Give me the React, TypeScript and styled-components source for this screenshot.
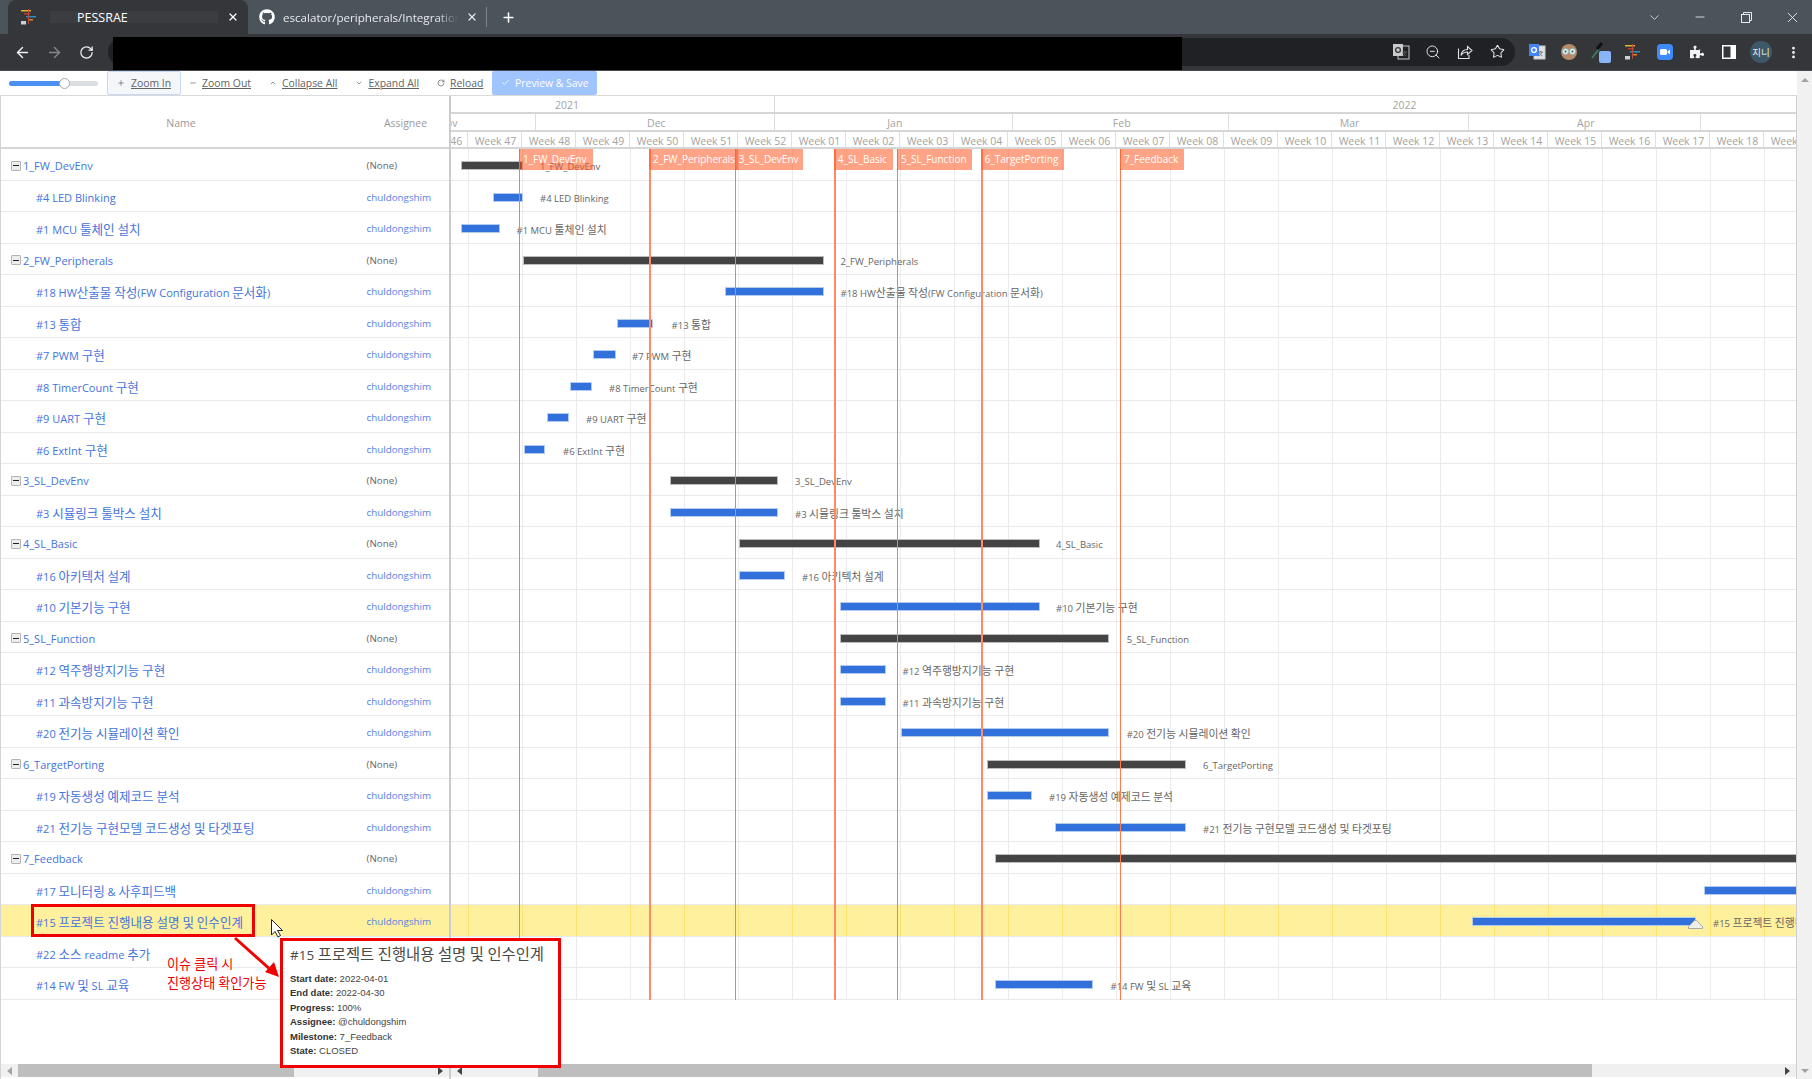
import React from 'react'
import styled, { createGlobalStyle } from 'styled-components'
import { ArrowLeft, ArrowRight, RotateCw, X, Plus, ChevronDown, ChevronUp, Minus, ZoomOut, Star, Check, EllipsisVertical } from 'lucide-react'
import { FaGithub, FaPuzzlePiece } from 'react-icons/fa'

const PANE_LEFT = 451
const ROW_HEIGHT = 31.5

const GlobalStyle = createGlobalStyle`
  html, body {
    margin: 0;
    padding: 0;
    background: #fff;
    overflow: hidden;
  }
  * {
    box-sizing: border-box;
  }
  body {
    font-family: 'Open Sans', 'Noto Sans CJK KR', sans-serif;
  }
`

const Page = styled.div`
  position: relative;
  width: 1812px;
  height: 1079px;
  display: flex;
  flex-direction: column;
  overflow: hidden;
`

const TabBar = styled.div`
  height: 34px;
  background: #4b545b;
  display: flex;
  align-items: stretch;
  padding-left: 8px;
  color: #e8eaed;
  font-size: 12px;
`

const ActiveTab = styled.div`
  position: relative;
  width: 240px;
  background: #35363a;
  border-radius: 8px 8px 0 0;
  display: flex;
  align-items: center;
  padding-left: 12px;
  color: #fff;
`

const TabTitle = styled.div`
  flex: 1;
  margin-left: 12px;
  height: 12px;
  background: #3b3d41;
  display: flex;
  align-items: center;
  padding-left: 27px;
  font-size: 12.5px;
`

const TabClose = styled.div`
  width: 30px;
  display: flex;
  justify-content: center;
`

const SecondTab = styled.div`
  width: 236px;
  display: flex;
  align-items: center;
  padding-left: 11px;
  gap: 8px;
`

const FadedTitle = styled.div`
  width: 175px;
  white-space: nowrap;
  overflow: hidden;
  font-size: 11.6px;
  -webkit-mask-image: linear-gradient(to right, #000 88%, transparent 100%);
  mask-image: linear-gradient(to right, #000 88%, transparent 100%);
`

const TabSeparator = styled.div`
  width: 1px;
  height: 20px;
  align-self: center;
  background: #7e868c;
  margin: 0 14px 0 2px;
`

const TabPlus = styled.div`
  display: flex;
  align-items: center;
`

const WindowControls = styled.div`
  margin-left: auto;
  margin-right: -3px;
  display: flex;
  align-items: center;
`

const WindowButton = styled.div`
  width: 46px;
  display: flex;
  justify-content: center;
  color: #e8eaed;
`

const NavBar = styled.div`
  position: relative;
  height: 37px;
  background: #35363a;
  border-bottom: 1px solid #4a4b4f;
  display: flex;
  align-items: center;
  padding-left: 6px;
  color: #dfe1e5;
`

const IconSlot = styled.div<{ $dim?: boolean }>`
  width: 32px;
  height: 28px;
  display: flex;
  align-items: center;
  justify-content: center;
  color: ${({ $dim }) => ($dim ? '#85878a' : '#f1f3f4')};
`

const Omnibox = styled.div`
  width: 1407px;
  height: 28px;
  margin-left: 6px;
  margin-right: 6px;
  margin-top: -1px;
  border-radius: 14px;
  background: #202124;
  display: flex;
  align-items: center;
  justify-content: flex-end;
  padding-right: 2px;
`

const Redaction = styled.div`
  position: absolute;
  left: 113px;
  top: 3px;
  bottom: 0;
  width: 1069px;
  background: #000;
`

const Avatar = styled.div`
  width: 22px;
  height: 22px;
  border-radius: 50%;
  background: #3d5866;
  color: #e8eaed;
  font-size: 9.5px;
  display: flex;
  align-items: center;
  justify-content: center;
`

const Main = styled.div`
  flex: 1;
  min-height: 0;
  display: flex;
`

const Content = styled.div`
  width: 1797px;
  display: flex;
  flex-direction: column;
`

const Toolbar = styled.div`
  height: 24px;
  display: flex;
  align-items: stretch;
  font-size: 10.4px;
  color: #606266;
`

const SliderBox = styled.div`
  width: 107px;
  padding: 0 9px;
  display: flex;
  align-items: center;
`

const SliderTrack = styled.div`
  position: relative;
  width: 90px;
  height: 5px;
  border-radius: 3px;
  background: #dcdfe2;
`

const SliderFill = styled.div`
  width: 55px;
  height: 100%;
  border-radius: 3px;
  background: #4a90f5;
`

const SliderThumb = styled.div`
  position: absolute;
  left: 50px;
  top: -3px;
  width: 11px;
  height: 11px;
  border-radius: 50%;
  background: #fff;
  border: 1px solid #a9a9a9;
`

const ToolButton = styled.div<{ $active?: boolean }>`
  display: flex;
  align-items: center;
  gap: ${({ $active }) => ($active ? '7px' : '6px')};
  padding: 0 ${({ $active }) => ($active ? '9px' : '8px')} 1px;
  margin-right: ${({ $active }) => ($active ? '-1px' : '0')};
  border: 1px solid ${({ $active }) => ($active ? '#c6d9f5' : 'transparent')};
  border-radius: 2px;
  background: ${({ $active }) => ($active ? '#f4f6f9' : 'transparent')};
  span {
    text-decoration: underline;
    white-space: nowrap;
  }
  svg {
    width: 8px;
    height: 8px;
    margin-right: -1px;
    flex: none;
  }
`

const SaveButton = styled.div`
  width: 105px;
  padding-bottom: 1px;
  background: #a0c4fd;
  color: #fff;
  border-radius: 2px;
  display: flex;
  align-items: center;
  justify-content: center;
  gap: 5px;
  white-space: nowrap;
  svg {
    width: 9px;
    height: 9px;
  }
`

const Gantt = styled.div`
  flex: 1;
  min-height: 0;
  display: flex;
  border-top: 1px solid #d9d9d9;
  border-left: 1px solid #d4d4d4;
  border-right: 1px solid #cfcfcf;
`

const LeftPane = styled.div`
  width: 450px;
  flex: none;
  display: flex;
  flex-direction: column;
  border-right: 2px solid #cccccc;
`

const NameHeader = styled.div`
  height: 53px;
  display: grid;
  grid-template-columns: 360px 1fr;
  align-items: center;
  padding-top: 2px;
  border-bottom: 2px solid #d6d6d6;
  color: #999;
  font-size: 10.5px;
  text-align: center;
`

const AssigneeTitle = styled.div`
  padding-left: 1px;
`

const Rows = styled.div`
  display: flex;
  flex-direction: column;
`

const NameRow = styled.div<{ $hl?: boolean }>`
  height: ${ROW_HEIGHT}px;
  flex: none;
  display: flex;
  align-items: center;
  padding-top: 3px;
  border-bottom: 1px solid #e9e9e9;
  background: ${({ $hl }) => ($hl ? '#fef09c' : 'transparent')};
`

const NameCell = styled.div<{ $group?: boolean }>`
  width: 365.5px;
  flex: none;
  display: flex;
  align-items: center;
  padding-left: ${({ $group }) => ($group ? '10px' : '35px')};
  color: #4474dc;
  font-size: 11px;
  white-space: pre;
`

// Hangul runs are set a little larger than the latin text around them
const Ko = styled.span`
  font-size: 1.14em;
`

const Toggle = styled.div`
  width: 10px;
  height: 10px;
  margin-right: 2px;
  background: #ededed;
  border: 1px solid #b4b4b4;
  border-radius: 1px;
  display: flex;
  align-items: center;
  justify-content: center;
  &::after {
    content: '';
    width: 6px;
    height: 1px;
    background: #222;
  }
`

const AssigneeCell = styled.div<{ $none?: boolean }>`
  color: ${({ $none }) => ($none ? '#666' : '#5681e2')};
  font-size: 9.8px;
`

const Spacer = styled.div`
  flex: 1;
`

const TimelinePane = styled.div`
  flex: 1;
  min-width: 0;
  display: flex;
  flex-direction: column;
  overflow: hidden;
`

const HeaderStrip = styled.div<{ $height: number }>`
  height: ${({ $height }) => $height}px;
  flex: none;
  display: flex;
  margin-left: -93px;
  border-bottom: 2px solid #d6d6d6;
  color: #a3a3a3;
  font-size: 10.5px;
`

const HeaderCell = styled.div<{ $border?: boolean }>`
  flex: none;
  display: flex;
  align-items: center;
  justify-content: center;
  padding-left: 2px;
  padding-top: 2px;
  white-space: nowrap;
  border-right: ${({ $border }) => ($border ? '1.5px solid #dddddd' : 'none')};
`

const WeekCell = styled(HeaderCell)`
  width: 54px;
  border-right: 1px solid #e0e0e0;
`

const WeekOffset = styled.div`
  width: 56px;
  flex: none;
  margin-left: -54px;
`

const TimelineRows = styled.div`
  position: relative;
  display: flex;
  flex-direction: column;
`

const TimelineRow = styled.div<{ $hl?: boolean }>`
  position: relative;
  height: ${ROW_HEIGHT}px;
  flex: none;
  border-bottom: 1px solid #e9e9e9;
  background-color: ${({ $hl }) => ($hl ? '#fef09c' : 'transparent')};
  background-image: linear-gradient(to right, ${({ $hl }) => ($hl ? '#fbe36e' : '#ebebeb')} 1px, transparent 1px);
  background-size: 54px 100%;
  background-position: 17px 0;
`

const Bar = styled.div<{ $group?: boolean }>`
  position: absolute;
  top: 12px;
  height: 9px;
  background: ${({ $group }) => ($group ? '#444444' : '#3271dc')};
  border: 1px solid ${({ $group }) => ($group ? '#bdbdbd' : '#b4caef')};
`

const BarLabel = styled.div`
  position: absolute;
  top: 10px;
  font-size: 9.5px;
  line-height: 16px;
  color: #666;
  white-space: pre;
`

const Handle = styled.svg`
  position: absolute;
  left: 1236.5px;
  top: 14.5px;
`

const Milestone = styled.div<{ $thick?: boolean }>`
  position: absolute;
  top: 0;
  bottom: 0;
  width: ${({ $thick }) => ($thick ? '2px' : '1px')};
  background: ${({ $thick }) => ($thick ? '#ff8a65' : '#ff7a50')};
`

const MilestoneTag = styled.div`
  position: absolute;
  left: 0;
  top: 0;
  height: 21px;
  background: rgba(255, 87, 34, 0.55);
  color: #fff;
  font-size: 10px;
  line-height: 20px;
  padding-left: 4px;
  white-space: nowrap;
`

const HScroll = styled.div`
  height: 13px;
  margin-bottom: 2px;
  flex: none;
  background: #f0f0f0;
  display: flex;
  align-items: stretch;
`

const ScrollTrack = styled.div`
  flex: 1;
  min-width: 0;
  display: flex;
`

const ScrollThumb = styled.div`
  background: #bebebe;
  height: 100%;
`

const HArrow = styled.div<{ $dir: 'left' | 'right'; $dim?: boolean }>`
  width: 17px;
  flex: none;
  display: flex;
  align-items: center;
  justify-content: center;
  &::after {
    content: '';
    border-top: 4px solid transparent;
    border-bottom: 4px solid transparent;
    ${({ $dir, $dim }) =>
      $dir === 'left'
        ? `border-right: 5px solid ${$dim ? '#a3a3a3' : '#444'};`
        : `border-left: 5px solid ${$dim ? '#a3a3a3' : '#444'};`}
  }
`

const PageScroll = styled.div`
  width: 15px;
  flex: none;
  background: #f1f1f1;
  display: flex;
  flex-direction: column;
  justify-content: space-between;
  align-items: center;
  padding: 7px 0 6px;
`

const VArrow = styled.div<{ $up?: boolean }>`
  border-left: 4px solid transparent;
  border-right: 4px solid transparent;
  ${({ $up }) => ($up ? 'border-bottom: 4px solid #a3a3a3;' : 'border-top: 4px solid #a3a3a3;')}
`

const RedBox = styled.div`
  position: absolute;
  left: 31px;
  top: 904px;
  width: 224px;
  height: 33px;
  border: 3px solid #f00000;
`

const Note = styled.div`
  position: absolute;
  left: 167px;
  top: 955px;
  color: #f00000;
  font-size: 11.5px;
  line-height: 19px;
  white-space: pre;
`

const Overlay = styled.svg`
  position: absolute;
  left: 0;
  top: 0;
  pointer-events: none;
`

const Tooltip = styled.div`
  position: absolute;
  left: 280px;
  top: 938px;
  width: 281px;
  height: 130px;
  background: #fff;
  border: 3px solid #f00000;
  padding: 2px 0 0 7px;
  color: #444;
  font-family: 'Liberation Sans', 'Noto Sans CJK KR', sans-serif;
  font-size: 9.5px;
`

const TooltipTitle = styled.div`
  font-family: 'Open Sans', 'Noto Sans CJK KR', sans-serif;
  font-size: 13.5px;
  line-height: 24px;
  color: #4a4a4a;
  margin-bottom: 5px;
  white-space: pre;
`

const TooltipLine = styled.div`
  line-height: 14.4px;
  b {
    color: #333;
    font-weight: 700;
  }
`

type Task = {
  name: string
  group?: boolean
  from?: number
  to?: number
  label?: number
}

const TASKS: Task[] = [
  { name: '1_FW_DevEnv', group: true, from: 461.4, to: 522.6, label: 540 },
  { name: '#4 LED Blinking', from: 492.5, to: 522.6, label: 540 },
  { name: '#1 MCU 툴체인 설치', from: 461.4, to: 500.2, label: 516.5 },
  { name: '2_FW_Peripherals', group: true, from: 523, to: 823.7, label: 840.5 },
  { name: '#18 HW산출물 작성(FW Configuration 문서화)', from: 724.7, to: 823.7, label: 840.5 },
  { name: '#13 통합', from: 616.5, to: 653.3, label: 671.6 },
  { name: '#7 PWM 구현', from: 592.8, to: 616, label: 632 },
  { name: '#8 TimerCount 구현', from: 569.7, to: 591.7, label: 609 },
  { name: '#9 UART 구현', from: 546.6, to: 568.6, label: 586 },
  { name: '#6 ExtInt 구현', from: 523.5, to: 545.4, label: 563 },
  { name: '3_SL_DevEnv', group: true, from: 670, to: 777.7, label: 795 },
  { name: '#3 시뮬링크 툴박스 설치', from: 670, to: 777.7, label: 795 },
  { name: '4_SL_Basic', group: true, from: 739, to: 1039.5, label: 1056 },
  { name: '#16 아키텍처 설계', from: 739, to: 784.7, label: 802 },
  { name: '#10 기본기능 구현', from: 839.5, to: 1039.5, label: 1056 },
  { name: '5_SL_Function', group: true, from: 839.5, to: 1108.5, label: 1126.7 },
  { name: '#12 역주행방지기능 구현', from: 839.5, to: 886, label: 902.5 },
  { name: '#11 과속방지기능 구현', from: 839.5, to: 886, label: 902.5 },
  { name: '#20 전기능 시뮬레이션 확인', from: 901, to: 1108.5, label: 1126.7 },
  { name: '6_TargetPorting', group: true, from: 986.5, to: 1185.6, label: 1203 },
  { name: '#19 자동생성 예제코드 분석', from: 986.5, to: 1032, label: 1049 },
  { name: '#21 전기능 구현모델 코드생성 및 타겟포팅', from: 1055, to: 1185.6, label: 1203 },
  { name: '7_Feedback', group: true, from: 994.5, to: 1800 },
  { name: '#17 모니터링 & 사후피드백', from: 1703.5, to: 1800 },
  { name: '#15 프로젝트 진행내용 설명 및 인수인계', from: 1472.3, to: 1695.7, label: 1713 },
  { name: '#22 소스 readme 추가', from: 1796, to: 1830 },
  { name: '#14 FW 및 SL 교육', from: 994.5, to: 1093, label: 1110.5 },
]

const MILESTONES = [
  { name: '1_FW_DevEnv', x: 519.6, width: 73.5 },
  { name: '2_FW_Peripherals', x: 649.7, width: 88.5, thick: true },
  { name: '3_SL_DevEnv', x: 735.4, width: 68.5 },
  { name: '4_SL_Basic', x: 834.4, width: 59, thick: true },
  { name: '5_SL_Function', x: 897.6, width: 74.5 },
  { name: '6_TargetPorting', x: 981.3, width: 83, thick: true },
  { name: '7_Feedback', x: 1120.6, width: 63.5 },
]

const YEARS = [
  { label: '2021', width: 417 },
  { label: '2022', width: 1258 },
]

const MONTHS = [
  { label: 'Nov', width: 178.4 },
  { label: 'Dec', width: 238.8 },
  { label: 'Jan', width: 238.3 },
  { label: 'Feb', width: 215.5 },
  { label: 'Mar', width: 240.3 },
  { label: 'Apr', width: 232 },
  { label: 'May', width: 239 },
]

const WEEKS = [
  '45', '46', '47', '48', '49', '50', '51', '52', '01', '02', '03', '04', '05', '06',
  '07', '08', '09', '10', '11', '12', '13', '14', '15', '16', '17', '18', '19',
]

const HIGHLIGHT = '#15 프로젝트 진행내용 설명 및 인수인계'

function mixed(text: string) {
  return text.split(/([\uac00-\ud7a3]+)/).map((part, i) => (i % 2 ? <Ko key={i}>{part}</Ko> : part))
}

function GanttLogo() {
  return (
    <svg width="18" height="18" viewBox="0 0 18 18">
      <rect x="1" y="2" width="10" height="1.5" fill="#e6b422" />
      <rect x="4" y="5" width="6" height="1.5" fill="#c0392b" />
      <rect x="6" y="8" width="10" height="1.5" fill="#2a8fbd" />
      <rect x="8" y="11" width="5" height="1.5" fill="#e67e22" />
      <rect x="8" y="1" width="1" height="15" fill="#b84a3a" />
      <rect x="1" y="13" width="5" height="3.5" fill="#c8d2d8" />
    </svg>
  )
}

function TranslateIcon({ color }: { color?: boolean }) {
  return (
    <svg width="18" height="18" viewBox="0 0 18 18">
      <rect x="6" y="3" width="11" height="13" fill={color ? '#dfe1e3' : 'none'} stroke="#c8cacc" />
      <rect x="1" y="1" width="10" height="12" fill={color ? '#4285f4' : '#c8cacc'} />
      <circle cx="6" cy="7" r="2.4" fill="none" stroke={color ? '#fff' : '#35363a'} strokeWidth="1.3" />
      <path d="M10 9h5M12.5 8v1M14 9c-.5 2-2 3.5-3.5 4M11 9.5c.5 1.5 2 3 3.5 3.5" stroke="#666" fill="none" strokeWidth="0.8" />
    </svg>
  )
}

function ShareIcon() {
  return (
    <svg width="16" height="16" viewBox="0 0 16 16" fill="none" stroke="#dfe1e5" strokeWidth="1.1">
      <path d="M1.5 4.500V14.500H12V11" />
      <path d="M4 11.500C4.500 7.500 7 5.500 10.500 5.500V2.500L15 6.500L10.500 10.500V8C8 8 5.500 9 4 11.500Z" />
    </svg>
  )
}

function FaceIcon() {
  return (
    <svg width="18" height="18" viewBox="0 0 18 18">
      <circle cx="9" cy="9" r="8" fill="#b58a6a" />
      <circle cx="5.500" cy="8.500" r="3" fill="#e4f2f2" stroke="#8fb6bb" />
      <circle cx="12.500" cy="8.500" r="3" fill="#e4f2f2" stroke="#8fb6bb" />
      <circle cx="5.500" cy="8.500" r="1" fill="#444" />
      <circle cx="12.500" cy="8.500" r="1" fill="#444" />
    </svg>
  )
}

function EyedropperIcon() {
  return (
    <svg width="22" height="24" viewBox="0 0 22 24">
      <path d="M2 18 L9 9" stroke="#3d7a55" strokeWidth="2" />
      <path d="M7 9 L12 3" stroke="#111" strokeWidth="3" />
      <rect x="9" y="11" width="12" height="12" rx="2" fill="#8ab4f8" />
    </svg>
  )
}

function ZoomAppIcon() {
  return (
    <svg width="16" height="16" viewBox="0 0 16 16">
      <rect width="16" height="16" rx="4" fill="#3d8bfd" />
      <rect x="3" y="5" width="7" height="6" rx="1.500" fill="#fff" />
      <path d="M10.500 7.500 L13 5.500 V10.500 L10.500 8.500 Z" fill="#fff" />
    </svg>
  )
}

function SidebarIcon() {
  return (
    <svg width="14" height="14" viewBox="0 0 14 14">
      <rect width="14" height="14" fill="#fff" />
      <rect x="1.500" y="1.500" width="7" height="11" fill="#35363a" />
    </svg>
  )
}

function RestoreIcon() {
  return (
    <svg width="11" height="11" viewBox="0 0 11 11" fill="none" stroke="#e8eaed">
      <rect x="0.500" y="2.500" width="8" height="8" />
      <path d="M2.500 2.500V0.500H10.500V8.500H8.500" />
    </svg>
  )
}

function Chrome() {
  return (
    <>
      <TabBar>
        <ActiveTab>
          <GanttLogo />
          <TabTitle>PESSRAE</TabTitle>
          <TabClose>
            <X size={12} strokeWidth={2.5} />
          </TabClose>
        </ActiveTab>
        <SecondTab>
          <FaGithub size={16} color="#fff" />
          <FadedTitle>escalator/peripherals/Integration</FadedTitle>
          <X size={12} strokeWidth={2.5} />
        </SecondTab>
        <TabSeparator />
        <TabPlus>
          <Plus size={15} strokeWidth={2.5} color="#fff" />
        </TabPlus>
        <WindowControls>
          <WindowButton>
            <ChevronDown size={15} strokeWidth={1.3} />
          </WindowButton>
          <WindowButton>
            <Minus size={14} strokeWidth={1.5} />
          </WindowButton>
          <WindowButton>
            <RestoreIcon />
          </WindowButton>
          <WindowButton>
            <X size={17} strokeWidth={1.3} />
          </WindowButton>
        </WindowControls>
      </TabBar>
      <NavBar>
        <IconSlot>
          <ArrowLeft size={17} strokeWidth={2} />
        </IconSlot>
        <IconSlot $dim>
          <ArrowRight size={17} strokeWidth={2} />
        </IconSlot>
        <IconSlot>
          <RotateCw size={15} strokeWidth={2} />
        </IconSlot>
        <Omnibox>
          <IconSlot>
            <TranslateIcon />
          </IconSlot>
          <IconSlot>
            <ZoomOut size={16} strokeWidth={1.5} color="#dfe1e5" />
          </IconSlot>
          <IconSlot>
            <ShareIcon />
          </IconSlot>
          <IconSlot>
            <Star size={15} strokeWidth={1.7} color="#dfe1e5" />
          </IconSlot>
        </Omnibox>
        <IconSlot>
          <TranslateIcon color />
        </IconSlot>
        <IconSlot>
          <FaceIcon />
        </IconSlot>
        <IconSlot>
          <EyedropperIcon />
        </IconSlot>
        <IconSlot>
          <GanttLogo />
        </IconSlot>
        <IconSlot>
          <ZoomAppIcon />
        </IconSlot>
        <IconSlot>
          <FaPuzzlePiece size={14} />
        </IconSlot>
        <IconSlot>
          <SidebarIcon />
        </IconSlot>
        <IconSlot>
          <Avatar>지니</Avatar>
        </IconSlot>
        <IconSlot>
          <EllipsisVertical size={15} strokeWidth={2.5} />
        </IconSlot>
        <Redaction />
      </NavBar>
    </>
  )
}

function GanttToolbar() {
  return (
    <Toolbar>
      <SliderBox>
        <SliderTrack>
          <SliderFill />
          <SliderThumb />
        </SliderTrack>
      </SliderBox>
      <ToolButton $active>
        <Plus />
        <span>Zoom In</span>
      </ToolButton>
      <ToolButton>
        <Minus />
        <span>Zoom Out</span>
      </ToolButton>
      <ToolButton>
        <ChevronUp />
        <span>Collapse All</span>
      </ToolButton>
      <ToolButton>
        <ChevronDown />
        <span>Expand All</span>
      </ToolButton>
      <ToolButton>
        <RotateCw />
        <span>Reload</span>
      </ToolButton>
      <SaveButton>
        <Check />
        Preview &amp; Save
      </SaveButton>
    </Toolbar>
  )
}

function TaskPane() {
  return (
    <LeftPane>
      <NameHeader>
        <div>Name</div>
        <AssigneeTitle>Assignee</AssigneeTitle>
      </NameHeader>
      <Rows>
        {TASKS.map(task => (
          <NameRow key={task.name} $hl={task.name === HIGHLIGHT}>
            <NameCell $group={task.group}>
              {task.group && <Toggle />}
              <span>{mixed(task.name)}</span>
            </NameCell>
            <AssigneeCell $none={task.group}>{task.group ? '(None)' : 'chuldongshim'}</AssigneeCell>
          </NameRow>
        ))}
      </Rows>
      <Spacer />
      <HScroll>
        <HArrow $dir="left" $dim />
        <ScrollTrack>
          <ScrollThumb style={{ width: 276 }} />
        </ScrollTrack>
        <HArrow $dir="right" />
      </HScroll>
    </LeftPane>
  )
}

function Timeline() {
  return (
    <TimelinePane>
      <HeaderStrip $height={18}>
        {YEARS.map(y => (
          <HeaderCell key={y.label} $border style={{ width: y.width }}>
            {y.label}
          </HeaderCell>
        ))}
      </HeaderStrip>
      <HeaderStrip $height={18}>
        {MONTHS.map(m => (
          <HeaderCell key={m.label} $border style={{ width: m.width }}>
            {m.label}
          </HeaderCell>
        ))}
      </HeaderStrip>
      <HeaderStrip $height={17}>
        <WeekOffset />
        {WEEKS.map(w => (
          <WeekCell key={w}>Week {w}</WeekCell>
        ))}
      </HeaderStrip>
      <TimelineRows>
        {TASKS.map(task => {
          const isHl = task.name === HIGHLIGHT
          return (
            <TimelineRow key={task.name} $hl={isHl}>
              <Bar
                $group={task.group}
                style={{ left: task.from! - PANE_LEFT, width: task.to! - task.from! }}
              />
              {task.label && <BarLabel style={{ left: task.label - PANE_LEFT }}>{mixed(task.name)}</BarLabel>}
              {isHl && (
                <Handle width="15" height="9" viewBox="0 0 15 9">
                  <path d="M0.500 8.500 V6.500 L6.500 0.500 H8.500 L14.500 6.500 V8.500 Z" fill="#eeeeea" stroke="#aaa" />
                </Handle>
              )}
            </TimelineRow>
          )
        })}
        {MILESTONES.map(m => (
          <Milestone key={m.name} $thick={m.thick} style={{ left: m.x - PANE_LEFT - 0.6 }}>
            <MilestoneTag style={{ width: m.width }}>{m.name}</MilestoneTag>
          </Milestone>
        ))}
      </TimelineRows>
      <Spacer />
      <HScroll>
        <HArrow $dir="left" />
        <ScrollTrack>
          <ScrollThumb style={{ marginLeft: 70, width: 1054 }} />
        </ScrollTrack>
        <HArrow $dir="right" />
      </HScroll>
    </TimelinePane>
  )
}

function Annotations() {
  return (
    <>
      <RedBox />
      <Overlay width="1812" height="1079" viewBox="0 0 1812 1079">
        <path d="M235 938 L272 971" stroke="#f00000" strokeWidth="3" fill="none" />
        <path d="M279 977 L265 972 L274 962 Z" fill="#f00000" />
        <path
          d="M271.500 919.500 V935 L275 931.500 L278 937 L280.500 935.500 L277.500 930.500 H282.500 Z"
          fill="#fff"
          stroke="#222"
        />
      </Overlay>
      <Note>
        {mixed('이슈 클릭 시')}
        <br />
        {mixed('진행상태 확인가능')}
      </Note>
      <Tooltip>
        <TooltipTitle>{mixed(HIGHLIGHT)}</TooltipTitle>
        <TooltipLine><b>Start date:</b> 2022-04-01</TooltipLine>
        <TooltipLine><b>End date:</b> 2022-04-30</TooltipLine>
        <TooltipLine><b>Progress:</b> 100%</TooltipLine>
        <TooltipLine><b>Assignee:</b> @chuldongshim</TooltipLine>
        <TooltipLine><b>Milestone:</b> 7_Feedback</TooltipLine>
        <TooltipLine><b>State:</b> CLOSED</TooltipLine>
      </Tooltip>
    </>
  )
}

export default function App() {
  return (
    <Page>
      <GlobalStyle />
      <Chrome />
      <Main>
        <Content>
          <GanttToolbar />
          <Gantt>
            <TaskPane />
            <Timeline />
          </Gantt>
        </Content>
        <PageScroll>
          <VArrow $up />
          <VArrow />
        </PageScroll>
      </Main>
      <Annotations />
    </Page>
  )
}
